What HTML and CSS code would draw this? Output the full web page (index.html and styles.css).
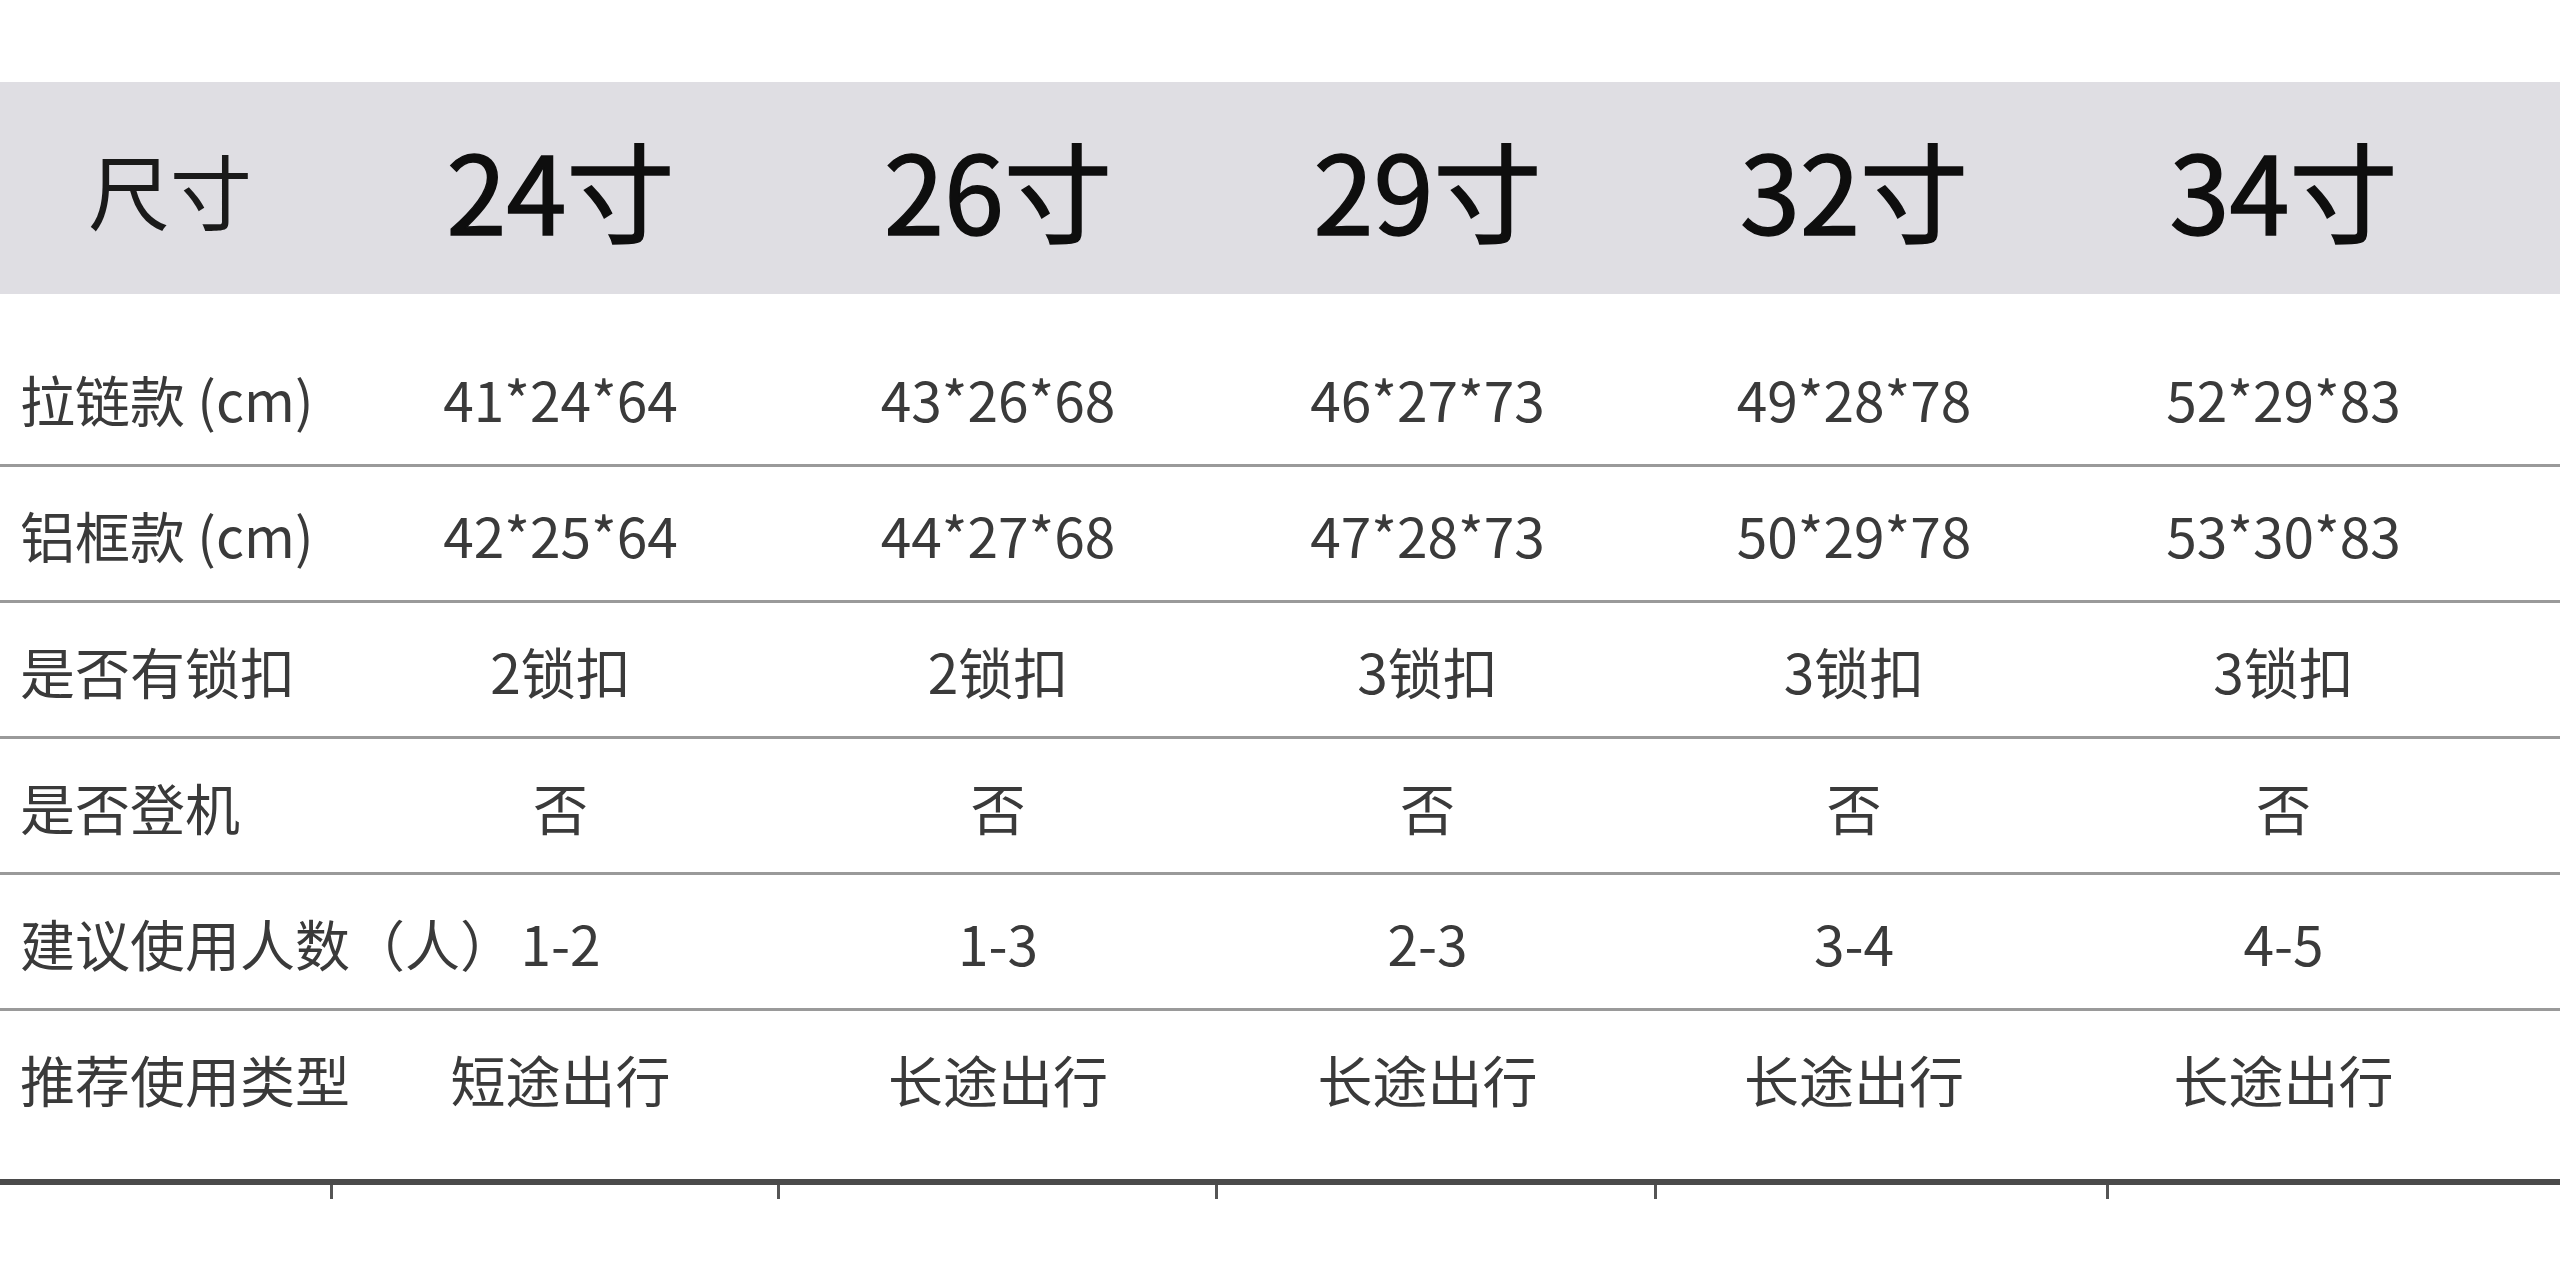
FILE: index.html
```html
<!DOCTYPE html>
<html lang="zh-CN">
<head>
<meta charset="utf-8">
<title>尺寸表</title>
<link rel="stylesheet" href="styles.css">
</head>
<body>
<div class="sheet">
  <div class="row head">
    <div class="label">尺寸</div>
    <div class="cell">24寸</div>
    <div class="cell">26寸</div>
    <div class="cell">29寸</div>
    <div class="cell">32寸</div>
    <div class="cell">34寸</div>
  </div>
  <div class="row data first">
    <div class="label">拉链款 (cm)</div>
    <div class="cell">41*24*64</div>
    <div class="cell">43*26*68</div>
    <div class="cell">46*27*73</div>
    <div class="cell">49*28*78</div>
    <div class="cell">52*29*83</div>
  </div>
  <div class="row data">
    <div class="label">铝框款 (cm)</div>
    <div class="cell">42*25*64</div>
    <div class="cell">44*27*68</div>
    <div class="cell">47*28*73</div>
    <div class="cell">50*29*78</div>
    <div class="cell">53*30*83</div>
  </div>
  <div class="row data">
    <div class="label">是否有锁扣</div>
    <div class="cell">2锁扣</div>
    <div class="cell">2锁扣</div>
    <div class="cell">3锁扣</div>
    <div class="cell">3锁扣</div>
    <div class="cell">3锁扣</div>
  </div>
  <div class="row data">
    <div class="label">是否登机</div>
    <div class="cell">否</div>
    <div class="cell">否</div>
    <div class="cell">否</div>
    <div class="cell">否</div>
    <div class="cell">否</div>
  </div>
  <div class="row data">
    <div class="label">建议使用人数（人）</div>
    <div class="cell">1-2</div>
    <div class="cell">1-3</div>
    <div class="cell">2-3</div>
    <div class="cell">3-4</div>
    <div class="cell">4-5</div>
  </div>
  <div class="row data last">
    <div class="label">推荐使用类型</div>
    <div class="cell">短途出行</div>
    <div class="cell">长途出行</div>
    <div class="cell">长途出行</div>
    <div class="cell">长途出行</div>
    <div class="cell">长途出行</div>
  </div>
  <div class="ticks">
    <span></span><span class="tick"></span><span class="tick"></span><span class="tick"></span><span class="tick"></span><span class="tick"></span>
  </div>
</div>
</body>
</html>
```
FILE: styles.css
```css
html, body {
  margin: 0;
  padding: 0;
  background: #ffffff;
}

body {
  width: 2560px;
  height: 1280px;
  overflow: hidden;
  font-family: "Noto Sans CJK SC", "Noto Sans", sans-serif;
}

.sheet {
  padding-top: 82px;
}

.row {
  display: grid;
  grid-template-columns: 340px 441px 434px 425px 428px 431px 1fr;
  align-items: center;
}

.cell {
  text-align: center;
  white-space: nowrap;
}

.head {
  height: 212px;
  background: #dfdee3;
  color: #0e0e0e;
}

.head .label {
  text-align: center;
  font-size: 82px;
  font-weight: 400;
  color: #1a1a1a;
}

.head .cell {
  font-size: 108px;
  font-weight: 400;
  -webkit-text-stroke: 1.5px #0e0e0e;
}

.data {
  height: 133px;
  border-bottom: 3px solid #9a9a9a;
  color: #3a3a3a;
  font-size: 55px;
}

.data.first {
  padding-top: 37px;
}

.data.last {
  padding-bottom: 35px;
  border-bottom: 6px solid #4a4a4a;
}

.data .label {
  padding-left: 20px;
  white-space: nowrap;
}

.ticks {
  display: grid;
  grid-template-columns: 330px 447px 438px 439px 452px 1fr;
  height: 14px;
}

.tick {
  border-left: 3px solid #555555;
}
```
